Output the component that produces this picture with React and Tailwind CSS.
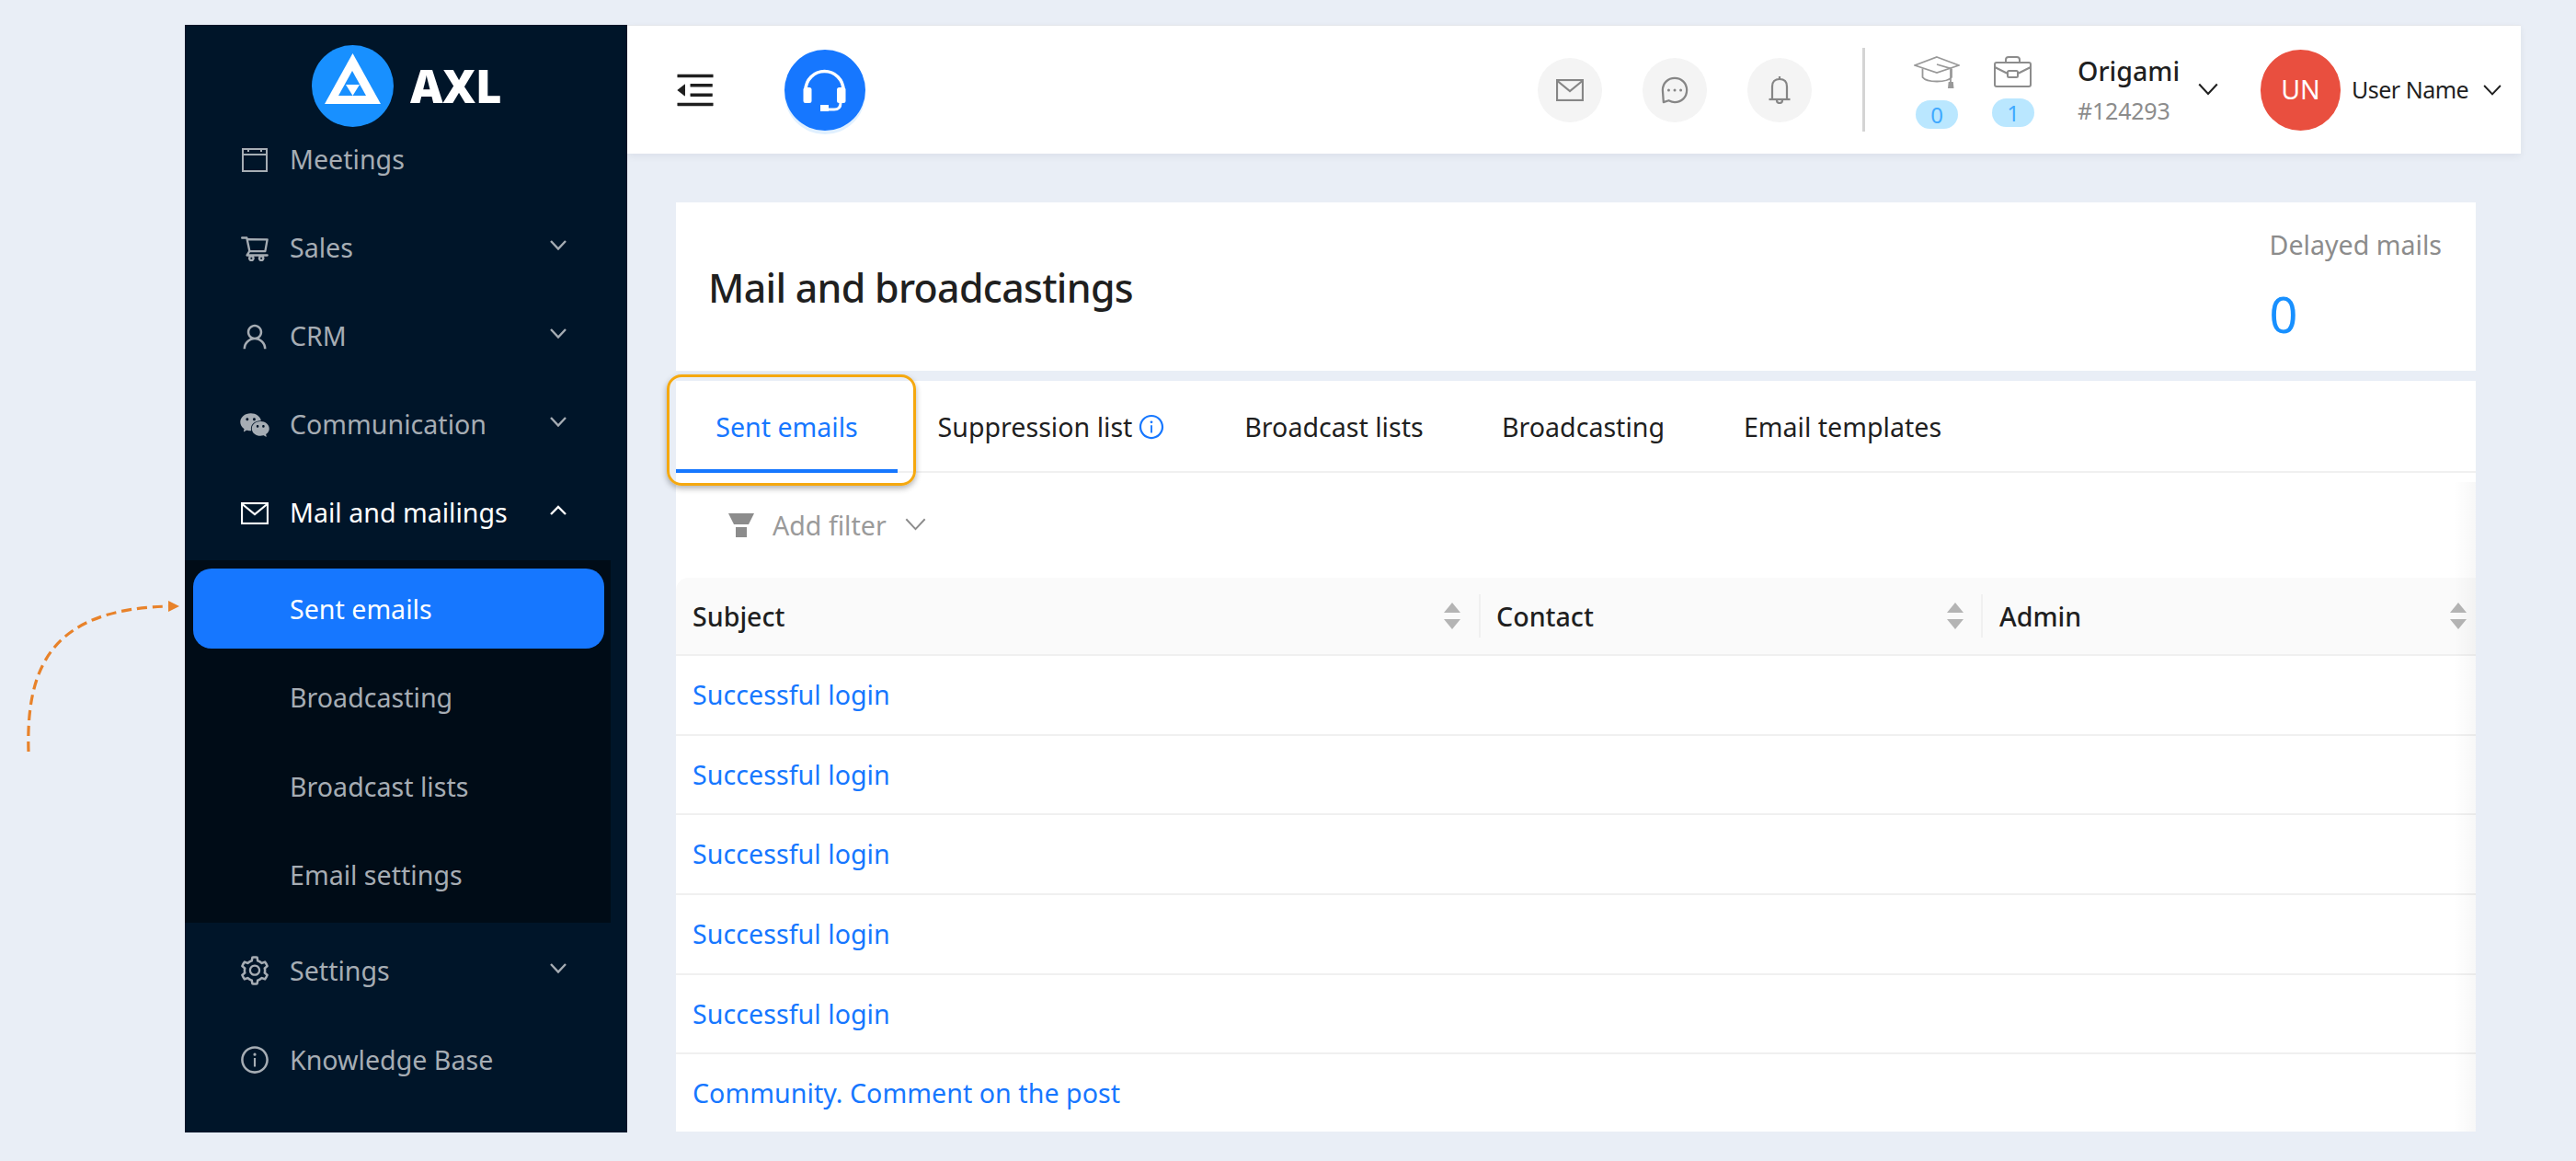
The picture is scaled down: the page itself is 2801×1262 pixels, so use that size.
import React from "react";
import {
  AiOutlineShoppingCart,
  AiOutlineUser,
  AiFillWechat,
  AiOutlineSetting,
  AiOutlineInfoCircle,
  AiOutlineMenuFold,
} from "react-icons/ai";

const FONT = "font-['Noto_Sans','Open_Sans',sans-serif]";

function Chevron({ up = false, className = "", sw = 1.7 }) {
  return (
    <svg viewBox="0 0 18 11" className={className} fill="none" stroke="currentColor" strokeWidth={sw}>
      <path d={up ? "M1 10 L9 2 L17 10" : "M1 1 L9 9.500 L17 1"} />
    </svg>
  );
}

function Calendar({ className }) {
  return (
    <svg viewBox="0 0 28 26" className={className} fill="none" stroke="currentColor" strokeWidth="2">
      <rect x="1" y="1" width="26" height="24" />
      <path d="M1 7 H27 M7 1 V4 M21 1 V4" />
    </svg>
  );
}

function MailGlyph({ className, sw = 2.2 }) {
  return (
    <svg viewBox="0 0 30 24" className={className} fill="none" stroke="currentColor" strokeWidth={sw}>
      <rect x="1" y="1" width="28" height="22" />
      <path d="M1.500 2 L15 13 L28.500 2" />
    </svg>
  );
}

function MenuItem({ icon, label, chevron, active }) {
  return (
    <div className={`flex items-center h-[87px] pl-[61px] pr-[66px] ${active ? "text-white" : "text-[#a6adb4]"}`}>
      <span className="w-[30px] h-[32px] flex items-center justify-center shrink-0">{icon}</span>
      <span className="ml-[23px] text-[28.6px] flex-1 leading-none">{label}</span>
      {chevron && <Chevron up={chevron === "up"} className="w-[18px] h-[11px] -mt-[6px] shrink-0" sw={2.4} />}
    </div>
  );
}

function SubItem({ label, active }) {
  return (
    <div
      className={`flex items-center h-[87px] ml-[9px] mr-[7px] pl-[105px] pt-[1px] rounded-[20px] text-[28.6px] ${
        active ? "bg-[#1677ff] text-white" : "text-[#a6adb4]"
      }`}
    >
      {label}
    </div>
  );
}

function Sidebar() {
  return (
    <aside className="w-[481px] h-[1204px] bg-[#001529] shrink-0">
      <div className="h-[103px] flex items-start pl-[138px] pt-[22px]">
        <svg viewBox="0 0 89 89" className="w-[89px] h-[89px] shrink-0">
          <circle cx="44.5" cy="44.5" r="44.5" fill="#1890ff" />
          <polygon points="44.5,9 75,64 14,64" fill="#fff" />
          <polygon points="44,28 59,55 29,55" fill="#1890ff" />
          <polygon points="37,43 52,43 44.5,55" fill="#fff" />
        </svg>
        <span className="ml-[18px] mt-[13px] text-[49px] font-extrabold leading-[62px] text-white font-['Open_Sans',sans-serif]">AXL</span>
      </div>
      <div className="flex flex-col gap-[9px]">
        <MenuItem icon={<Calendar className="w-[28px] h-[26px] shrink-0" />} label="Meetings" />
        <MenuItem icon={<AiOutlineShoppingCart className="w-[34px] h-[34px] shrink-0" />} label="Sales" chevron="down" />
        <MenuItem icon={<AiOutlineUser className="w-[34px] h-[34px] shrink-0" />} label="CRM" chevron="down" />
        <MenuItem icon={<AiFillWechat className="w-[36px] h-[36px] shrink-0" />} label="Communication" chevron="down" />
        <MenuItem icon={<MailGlyph className="w-[30px] h-[24px] shrink-0" />} label="Mail and mailings" chevron="up" active />
      </div>
      <div className="w-[463px] mt-[8px] bg-[#000c17] pt-[9px] pb-[8px] flex flex-col gap-[9.5px]">
        <SubItem label="Sent emails" active />
        <SubItem label="Broadcasting" />
        <SubItem label="Broadcast lists" />
        <SubItem label="Email settings" />
      </div>
      <div className="mt-[9px] flex flex-col gap-[10px]">
        <MenuItem icon={<AiOutlineSetting className="w-[36px] h-[36px] shrink-0" />} label="Settings" chevron="down" />
        <MenuItem icon={<AiOutlineInfoCircle className="w-[34px] h-[34px] shrink-0" />} label="Knowledge Base" />
      </div>
    </aside>
  );
}

function RoundIcon({ children }) {
  return <div className="w-[70px] h-[70px] rounded-full bg-[#f4f4f4] flex items-center justify-center text-[#868686]">{children}</div>;
}

function HatIcon() {
  return (
    <svg viewBox="0 0 50 36" className="w-[50px] h-[36px]" fill="none" stroke="#999" strokeWidth="1.8">
      <path d="M25 1 L49 10 L25 18 L1 10 Z" />
      <path d="M9.500 13.500 V23 C14 29 36 29 41 23 V13.500" />
      <path d="M25 9 L40 13.500 V28" />
      <path d="M38.500 29 H42 L42.500 34 H38 Z" fill="#999" />
    </svg>
  );
}

function CaseIcon() {
  return (
    <svg viewBox="0 0 42 34" className="w-[42px] h-[34px]" fill="none" stroke="#8c8c8c" strokeWidth="2">
      <rect x="1" y="7" width="39" height="26" rx="2" />
      <path d="M13 7 V4 Q13 1 16 1 H25 Q28 1 28 4 V7" />
      <path d="M1 12 L15 19 M40 12 L26 19" />
      <rect x="15" y="16" width="11" height="7" rx="1.500" />
    </svg>
  );
}

function Badge({ children }) {
  return <div className="w-[46px] h-[31px] rounded-[16px] bg-[#bae7ff] text-[#40a9ff] text-[24px] leading-[31px] text-center">{children}</div>;
}

function Header() {
  return (
    <header className="h-[140px] bg-white flex items-center pl-[49px] pr-[21px] shadow-[0_3px_8px_rgba(0,21,41,0.06)] border-t border-[#e4e6ea] relative">
      <AiOutlineMenuFold className="w-[50px] h-[50px] text-[#1f1f1f] shrink-0" />
      <div className="ml-[72px] w-[88px] h-[88px] rounded-full bg-[#1677ff] flex items-center justify-center text-white shadow-[0_4px_0_#e0f0ff]">
        <svg viewBox="0 0 88 88" className="w-[88px] h-[88px]" fill="#fff">
          <path d="M23 44 A20.500 20.500 0 0 1 64 44" fill="none" stroke="#fff" strokeWidth="3.600" />
          <rect x="20.500" y="41" width="9" height="17" rx="2.500" />
          <rect x="57" y="41" width="9.500" height="17" rx="2.500" />
          <path d="M61 56 V58 Q61 65 54 65 H45" fill="none" stroke="#fff" strokeWidth="3" />
          <rect x="39" y="60" width="9" height="7" />
        </svg>
      </div>
      <div className="ml-auto flex items-center gap-[44px]">
        <RoundIcon>
          <MailGlyph className="w-[30px] h-[24px]" />
        </RoundIcon>
        <RoundIcon>
          <svg viewBox="0 0 32 32" className="w-[30px] h-[30px]" fill="none" stroke="currentColor" strokeWidth="2.400">
            <path d="M3 30 L2 16 C2 8 8 2 16 2 C24 2 30 8 30 16 C30 24 24 30 16 30 C13 30 11 29 9 28 Z" strokeLinejoin="round" />
            <circle cx="9" cy="16" r="1.600" fill="currentColor" stroke="none" />
            <circle cx="16" cy="16" r="1.600" fill="currentColor" stroke="none" />
            <circle cx="23" cy="16" r="1.600" fill="currentColor" stroke="none" />
          </svg>
        </RoundIcon>
        <RoundIcon>
          <svg viewBox="0 0 24 31" className="w-[24px] h-[31px]" fill="none" stroke="currentColor" strokeWidth="2.200">
            <path d="M0.500 26 H23.500" />
            <path d="M4 26 V12 C4 7 7 4 12 4 C17 4 20 7 20 12 V26" />
            <path d="M12 1 V4" />
            <path d="M9 27 C9 31 15 31 15 27" />
          </svg>
        </RoundIcon>
      </div>
      <div className="ml-[55px] w-[3px] h-[91px] bg-[#d4d4d4]" />
      <div className="ml-[53px] flex items-start gap-[35px] mt-[5px]">
        <div className="flex flex-col items-center gap-[12px] w-[50px]">
          <HatIcon />
          <Badge>0</Badge>
        </div>
        <div className="flex flex-col items-center gap-[12px] w-[46px]">
          <CaseIcon />
          <Badge>1</Badge>
        </div>
      </div>
      <div className="ml-[47px] w-[131px] flex flex-col leading-none">
        <span className="text-[28.6px] font-medium text-[#1f1f1f] leading-[36px]">Origami</span>
        <span className="mt-[8px] text-[25px] tracking-[-0.2px] text-[#8c8c8c] leading-[34px]">#124293</span>
      </div>
      <Chevron className="w-[22px] h-[14px] text-[#1f1f1f] -mt-[2px] shrink-0" />
      <div className="ml-[46px] w-[87px] h-[88px] shrink-0 rounded-full bg-[#e94f3f] text-white text-[28.6px] flex items-center justify-center">UN</div>
      <span className="ml-[12px] w-[128px] text-[25px] tracking-[-0.5px] text-[#1f1f1f] whitespace-nowrap">User Name</span>
      <Chevron className="ml-[15px] w-[20px] h-[14px] text-[#1f1f1f] shrink-0" />
    </header>
  );
}

function Tab({ label, active, children, w }) {
  return (
    <div className={`h-[100px] flex items-center justify-center ${w} text-[28.6px] relative ${active ? "text-[#1677ff]" : "text-[#1f1f1f]"}`}>
      <span className="whitespace-nowrap flex items-center">{label}{children}</span>
      {active && <div className="absolute left-0 right-0 bottom-0 h-[4px] bg-[#1677ff]" />}
    </div>
  );
}

function Sorter() {
  return (
    <svg viewBox="0 0 18 29" className="w-[18px] h-[29px] shrink-0" fill="#b4b4b4">
      <polygon points="9,0 18,11 0,11" />
      <polygon points="0,18 18,18 9,29" />
    </svg>
  );
}

function HeadCell({ label, className, divider = true }) {
  return (
    <div className={`relative h-full flex items-center text-[28.6px] font-medium text-[#1f1f1f] ${className}`}>
      <span className="flex-1 mt-[1px]">{label}</span>
      <Sorter />
      {divider && <div className="absolute right-0 top-[18px] bottom-[18px] w-[2px] bg-[#f0f0f0]" />}
    </div>
  );
}

const rows = ["Successful login", "Successful login", "Successful login", "Successful login", "Successful login", "Community. Comment on the post"];

function Content() {
  return (
    <div className="pl-[53px] pr-[49px] pt-[53px]">
      <div className="h-[183px] bg-white flex items-start justify-between pl-[35px] pr-[37px]">
        <h1 className="text-[42.9px] font-medium tracking-[-0.7px] text-[#1f1f1f] mt-[64px] leading-[58px]">Mail and broadcastings</h1>
        <div className="mt-[27px] flex flex-col">
          <span className="text-[28.6px] text-[#8c8c8c] leading-[38px]">Delayed mails</span>
          <span className="mt-[29px] text-[54px] text-[#1890ff] leading-[54px]">0</span>
        </div>
      </div>
      <div className="mt-[11px] bg-white relative">
        <div className="flex border-b-2 border-[#f0f0f0] h-[100px] items-stretch">
          <Tab label="Sent emails" active w="w-[241px]" />
          <Tab label="Suppression list" w="w-[335px]">
            <AiOutlineInfoCircle className="w-[30px] h-[30px] ml-[6px] text-[#1677ff]" />
          </Tab>
          <Tab label="Broadcast lists" w="w-[279px]" />
          <Tab label="Broadcasting" w="w-[263px]" />
          <Tab label="Email templates" w="w-[301px]" />
        </div>
        <div className="h-[114px] flex items-center pl-[57px] text-[#8c8c8c]">
          <svg viewBox="0 0 28 26" className="w-[28px] h-[26px]" fill="#8c8c8c">
            <polygon points="0,0 28,0 22,12 6,12" />
            <rect x="8" y="15" width="12" height="11" />
          </svg>
          <span className="ml-[20px] text-[28.6px] text-[#9a9a9a]">Add filter</span>
          <Chevron className="ml-[20px] w-[23px] h-[14px] text-[#8c8c8c] -mt-[2px]" sw={1.5} />
        </div>
        <div className="h-[85px] bg-[#fafafa] rounded-tl-[14px] border-b-2 border-[#f0f0f0] flex">
          <HeadCell label="Subject" className="w-[875px] pl-[18px] pr-[22px]" />
          <HeadCell label="Contact" className="w-[546px] pl-[17px] pr-[21px]" />
          <HeadCell label="Admin" className="flex-1 pl-[18px] pr-[10px]" divider={false} />
        </div>
        {rows.map((r, i) => (
          <div key={i} className={`flex items-center pl-[18px] text-[28.6px] tracking-[0.05px] text-[#1677ff] ${i < 5 ? "h-[86.7px] border-b-2 border-[#f0f0f0]" : "h-[84px]"}`}>
            {r}
          </div>
        ))}
        <div className="absolute right-0 top-[110px] bottom-0 w-[24px] pointer-events-none bg-gradient-to-r from-transparent to-[rgba(0,0,0,0.03)]" />
        <div className="absolute left-[-10px] top-[-7px] w-[271px] h-[121px] rounded-[16px] border-[3.5px] border-[#f5a80f] shadow-[0_3px_6px_rgba(0,0,0,0.3)] pointer-events-none" />
      </div>
    </div>
  );
}

export default function App() {
  return (
    <div className={`relative w-[2801px] h-[1262px] overflow-hidden bg-[#e9eef6] flex pl-[201px] pt-[27px] ${FONT}`}>
      <svg viewBox="0 0 200 170" className="absolute left-[0px] top-[650px] w-[200px] h-[170px]" fill="none">
        <path d="M31 167 C28 70 60 12 184 9" stroke="#e8822a" strokeWidth="3.200" strokeDasharray="11 6" />
        <polygon points="183,3 195,9 183,15" fill="#e8822a" />
      </svg>
      <Sidebar />
      <main className="w-[2059px] shrink-0">
        <Header />
        <Content />
      </main>
    </div>
  );
}
